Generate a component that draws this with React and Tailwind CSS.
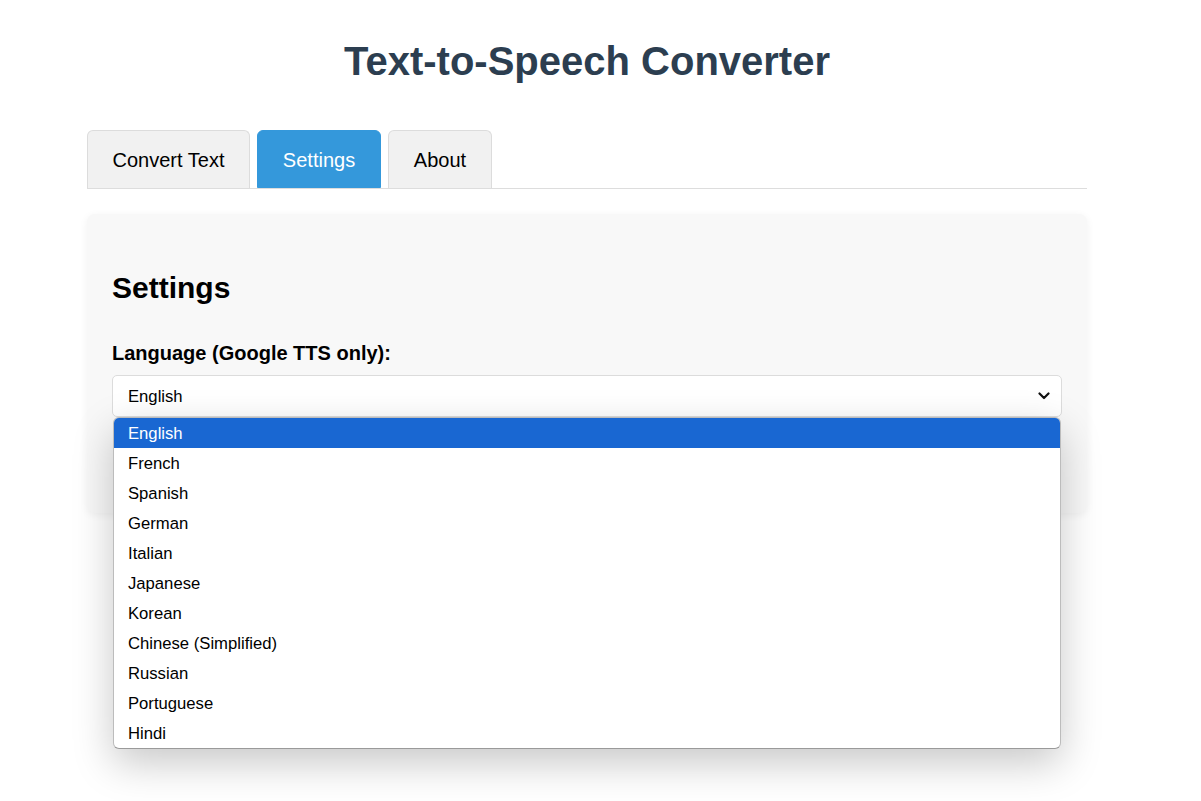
import React from 'react';

const languages = [
    'English',
    'French',
    'Spanish',
    'German',
    'Italian',
    'Japanese',
    'Korean',
    'Chinese (Simplified)',
    'Russian',
    'Portuguese',
    'Hindi',
];

const tabs = [
    { label: 'Convert Text', width: 'w-[163px]', active: false },
    { label: 'Settings', width: 'w-[124px]', active: true },
    { label: 'About', width: 'w-[104px]', active: false },
];

const App = () => {
    return (
        <div className="min-h-[801px] bg-white font-['Liberation_Sans',Arial,sans-serif] text-black overflow-hidden">
            <div className="w-[1000px] ml-[87px] pt-[38px]">
                <h1 className="text-center text-[40px] leading-[46px] font-bold text-[#2c3e50]">
                    Text-to-Speech Converter
                </h1>

                {/* Tabs */}
                <div className="mt-[46px] flex gap-[7px] border-b border-[#ddd]">
                    {tabs.map((tab) => (
                        <div
                            key={tab.label}
                            className={`${tab.width} h-[58px] pt-[2px] flex items-center justify-center text-[20px] leading-[23px] rounded-t-[6px] ${
                                tab.active
                                    ? 'bg-[#3498db] text-white border border-[#3498db]'
                                    : 'bg-[#f1f1f1] text-black border border-b-0 border-[#dcdcdc]'
                            }`}
                        >
                            {tab.label}
                        </div>
                    ))}
                </div>

                {/* Settings card */}
                <div className="mt-[25px] bg-[#f8f8f8] rounded-[8px] shadow-[0_2px_8px_rgba(0,0,0,0.06)] px-[25px] pt-[25px] pb-[96px]">
                    <h2 className="mt-[31px] text-[30px] leading-[35px] font-bold">Settings</h2>

                    <div className="relative mt-[37px]">
                        <label className="block text-[20px] leading-[23px] font-bold mb-[10px]">
                            Language (Google TTS only):
                        </label>
                        <div className="h-[42px] bg-white border border-[#dcdcdc] rounded-[5px] flex items-center justify-between pl-[15px] pr-[11px] text-[16.67px]">
                            <span>English</span>
                            <svg width="12" height="8" viewBox="0 0 12 8" fill="none">
                                <path d="M1.5 1.5 L6 6 L10.5 1.5" stroke="#111" strokeWidth="2.2" strokeLinecap="round" strokeLinejoin="round" />
                            </svg>
                        </div>

                        {/* Open dropdown list */}
                        <div className="absolute left-[1px] right-[1px] top-[75px] z-10 bg-white border border-[#bcbcbc] border-b-[#9a9a9a] rounded-[6px] overflow-hidden shadow-[0_14px_40px_rgba(0,0,0,0.22)]">
                            {languages.map((lang, i) => (
                                <div
                                    key={lang}
                                    className={`h-[30px] flex items-center pl-[14px] text-[16.67px] ${
                                        i === 0 ? 'bg-[#1967d2] text-white' : 'text-black'
                                    }`}
                                >
                                    {lang}
                                </div>
                            ))}
                        </div>
                    </div>
                </div>
            </div>
        </div>
    );
};

export default App;
